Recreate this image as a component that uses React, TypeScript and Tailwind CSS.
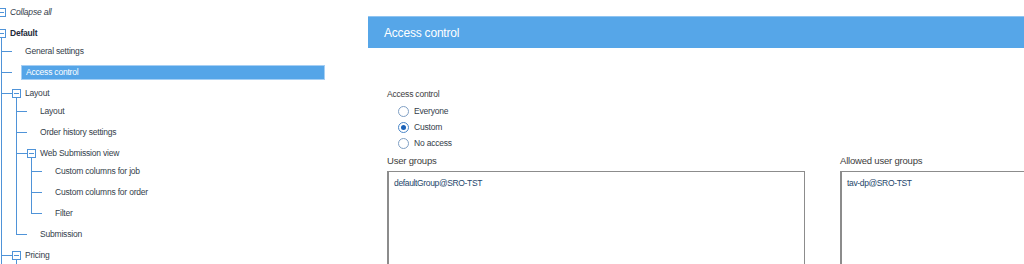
import React from "react";

type Node = {
  label: string;
  children?: Node[];
  selected?: boolean;
  open?: boolean;
};

const tree: Node[] = [
  { label: "General settings" },
  { label: "Access control", selected: true },
  {
    label: "Layout",
    children: [
      { label: "Layout" },
      { label: "Order history settings" },
      {
        label: "Web Submission view",
        children: [
          { label: "Custom columns for job" },
          { label: "Custom columns for order" },
          { label: "Filter" },
        ],
      },
      { label: "Submission" },
    ],
  },
  // Pricing is expanded, its children sit below the fold
  { label: "Pricing", open: true },
];

const Box = ({ stub }: { stub?: boolean }) => (
  <span className="relative flex h-[9px] w-[9px] shrink-0 items-center justify-center border border-[#4f93d8] bg-white">
    <span className="h-px w-[5px] bg-[#4f93d8]" />
    {stub && <span className="absolute left-[3px] top-full h-[8px] w-px bg-[#4f93d8]" />}
  </span>
);

const TreeItem = ({ node, last }: { node: Node; last: boolean }) => {
  const hasKids = !!node.children?.length;
  const folder = hasKids || node.open;
  return (
    <div className={last ? "" : "border-l border-[#4f93d8]"}>
      <div className="flex h-[21px] items-center">
        {last ? (
          <span className="h-[11px] w-[11px] shrink-0 self-start border-b border-l border-[#4f93d8]" />
        ) : (
          <span className="h-px w-[10px] shrink-0 bg-[#4f93d8]" />
        )}
        {folder ? <Box stub /> : <span className="w-[9px] shrink-0" />}
        <span
          className={`flex h-[15px] flex-1 items-center pl-[4px] ${
            node.selected ? "border border-[#a6cff4] bg-[#55a5e8] pl-[3px] text-white" : ""
          }`}
        >
          {node.label}
        </span>
      </div>
      {hasKids && (
        <div className={`-mt-[3px] ${last ? "ml-[15px]" : "ml-[14px]"}`}>
          {node.children!.map((c, i) => (
            <TreeItem key={i} node={c} last={i === node.children!.length - 1} />
          ))}
        </div>
      )}
    </div>
  );
};

const Radio = ({ label, checked }: { label: string; checked?: boolean }) => (
  <div className="flex h-[16px] items-center gap-[5px]">
    <span
      className={`flex h-[11px] w-[11px] items-center justify-center rounded-full border ${
        checked ? "border-[#4a86c8]" : "border-[#7f9fc4]"
      } bg-white`}
    >
      {checked && <span className="h-[5px] w-[5px] rounded-full bg-[#1c63b8]" />}
    </span>
    <span>{label}</span>
  </div>
);

const GroupList = ({ title, items }: { title: string; items: string[] }) => (
  <div className="w-[418px] shrink-0">
    <div className="mb-[4px] h-[13px] text-[9.5px] leading-[13px] tracking-[-0.2px] text-[#3c3c3c]">
      {title}
    </div>
    <div className="h-[120px] border border-l-2 border-[#8c8c8c] px-[5px] pt-[5px] text-[#24466b]">
      {items.map((t) => (
        <div key={t} className="h-[12px] leading-[12px] tracking-[-0.35px]">
          {t}
        </div>
      ))}
    </div>
  </div>
);

export default function App() {
  return (
    <div
      className="flex h-[264px] w-[1024px] overflow-hidden bg-white text-[8.5px] tracking-[-0.2px] text-[#333d4a]"
      style={{ fontFamily: '"Liberation Sans", Arial, sans-serif' }}
    >
      <div className="h-[264px] w-[368px] shrink-0 overflow-hidden pt-[2px]">
        <div className="-ml-[3px] w-[328px]">
          <div className="flex h-[21px] items-center gap-[4px] italic">
            <Box />
            <span>Collapse all</span>
          </div>
          <div className="flex h-[21px] items-center gap-[4px] font-bold text-[#1e2a38]">
            <Box stub />
            <span>Default</span>
          </div>
          <div className="-mt-[3px] ml-[4px] border-l border-[#4f93d8]">
            <div className="-ml-px">
              {tree.map((n, i) => (
                <TreeItem key={i} node={n} last={false} />
              ))}
            </div>
          </div>
        </div>
      </div>

      <div className="flex-1 overflow-hidden pt-[16px]">
        <div className="flex h-[32px] items-center border-t border-[#8fc4f1] bg-[#56a6e8] pl-[16px] text-[12px] tracking-[-0.2px] text-white">
          Access control
        </div>
        <div className="pl-[19px] pt-[40px]">
          <div className="h-[12px] leading-[12px] text-[#3c3c3c]">Access control</div>
          <div className="mt-[3px] pl-[11px]">
            <Radio label="Everyone" />
            <Radio label="Custom" checked />
            <Radio label="No access" />
          </div>
          <div className="mt-[3px] flex gap-[35px]">
            <GroupList title="User groups" items={["defaultGroup@SRO-TST"]} />
            <GroupList title="Allowed user groups" items={["tav-dp@SRO-TST"]} />
          </div>
        </div>
      </div>
    </div>
  );
}
